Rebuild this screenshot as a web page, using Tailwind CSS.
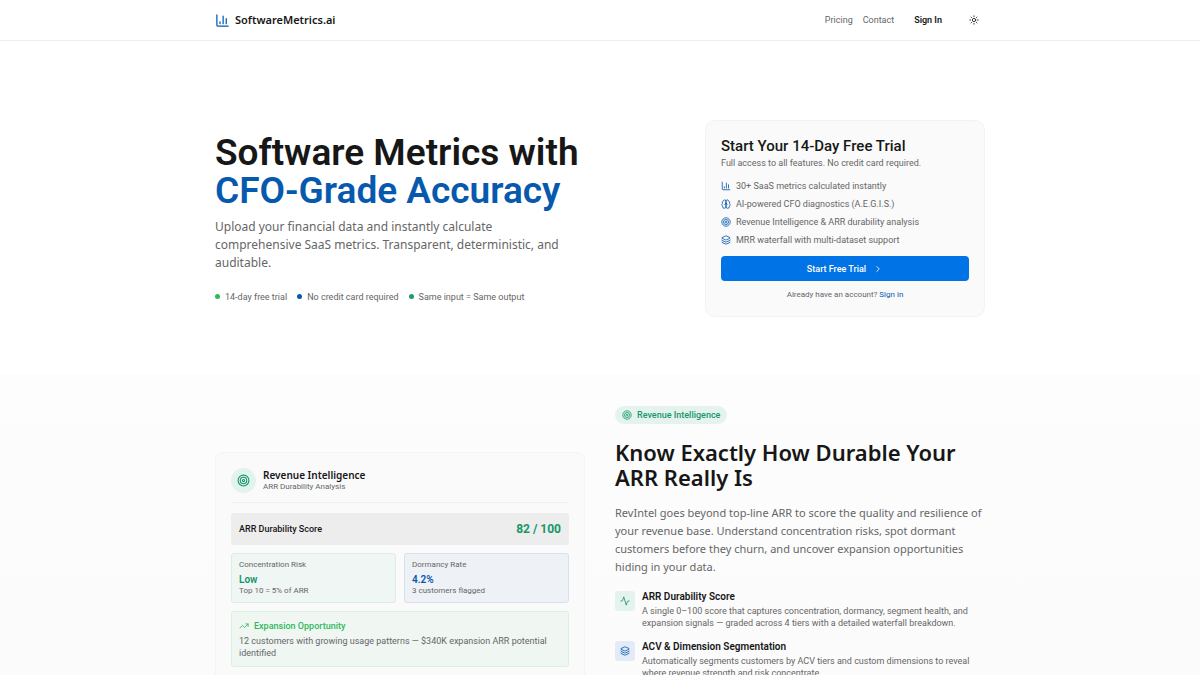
<!DOCTYPE html>
<html lang="en">
<head>
    <meta charset="UTF-8">
    <meta name="viewport" content="width=device-width, initial-scale=1.0">
    <title>SoftwareMetrics.ai</title>
    <script src="https://cdn.jsdelivr.net/npm/@tailwindcss/browser@4"></script>
</head>
<body class="bg-white text-[#171717] font-['Roboto','Noto_Sans',sans-serif] text-[9px] leading-[14px]">

    <!-- Shared icons -->
    <svg class="hidden" aria-hidden="true">
        <symbol id="chart" viewBox="0 0 24 24" fill="none" stroke="currentColor" stroke-width="2" stroke-linecap="round" stroke-linejoin="round">
            <path d="M3 3v16a2 2 0 0 0 2 2h16M8 17v-3M13 17V5M18 17V9" />
        </symbol>
        <symbol id="brain" viewBox="0 0 24 24" fill="none" stroke="currentColor" stroke-width="2" stroke-linecap="round" stroke-linejoin="round">
            <path d="M12 5a3 3 0 1 0-6 .1 4 4 0 0 0-2.5 5.8 4 4 0 0 0 .6 6.6A4 4 0 1 0 12 18ZM12 5a3 3 0 1 1 6 .1 4 4 0 0 1 2.5 5.8 4 4 0 0 1-.6 6.6A4 4 0 1 1 12 18ZM15 13a4.500 4.500 0 0 1-3-4 4.500 4.500 0 0 1-3 4" />
        </symbol>
        <symbol id="target" viewBox="0 0 24 24" fill="none" stroke="currentColor" stroke-width="2">
            <circle cx="12" cy="12" r="10" /><circle cx="12" cy="12" r="6" /><circle cx="12" cy="12" r="2" />
        </symbol>
        <symbol id="layers" viewBox="0 0 24 24" fill="none" stroke="currentColor" stroke-width="2" stroke-linecap="round" stroke-linejoin="round">
            <path d="M12.800 2.200a2 2 0 0 0-1.600 0L2.600 6.100a1 1 0 0 0 0 1.800l8.600 3.900a2 2 0 0 0 1.600 0l8.600-3.900a1 1 0 0 0 0-1.800ZM2 12a1 1 0 0 0 .6.900l8.600 3.900a2 2 0 0 0 1.600 0l8.600-3.900A1 1 0 0 0 22 12M2 17a1 1 0 0 0 .6.900l8.600 3.900a2 2 0 0 0 1.600 0l8.600-3.900A1 1 0 0 0 22 17" />
        </symbol>
    </svg>

    <!-- Header -->
    <header class="border-b border-[#eeeeee]">
        <div class="max-w-[800px] h-10 mx-auto px-[15px] flex items-center justify-between">
            <a href="#" class="flex items-center gap-[5px] font-['Noto_Sans',sans-serif] text-[11px] font-semibold">
                <svg class="size-[15px] text-[#0759ae]"><use href="#chart" /></svg>
                SoftwareMetrics.ai
            </a>
            <nav class="flex items-center text-[#666666]">
                <a href="#" class="mr-[10px]">Pricing</a>
                <a href="#" class="mr-[20px]">Contact</a>
                <a href="#" class="mr-[27px] font-semibold text-[#171717]">Sign In</a>
                <button type="button" aria-label="Toggle theme" class="mr-[6px] text-[#171717]">
                    <svg class="size-[10px] block" viewBox="0 0 24 24" fill="none" stroke="currentColor" stroke-width="2" stroke-linecap="round">
                        <circle cx="12" cy="12" r="4" />
                        <path d="M12 2v2M12 20v2M4.900 4.900l1.400 1.400M17.700 17.700l1.400 1.400M2 12h2M20 12h2M6.300 17.700l-1.400 1.400M19.100 4.900l-1.400 1.400" />
                    </svg>
                </button>
            </nav>
        </div>
    </header>

    <main>
        <!-- Hero -->
        <section class="max-w-[800px] mx-auto px-[15px] pt-[79px] pb-[57px] flex flex-col md:flex-row md:items-center justify-between gap-8">
            <div class="max-w-[400px]">
                <h1 class="text-[37px] leading-[38px] font-semibold">
                    Software Metrics with
                    <span class="block text-[#0759ae]">CFO-Grade Accuracy</span>
                </h1>
                <p class="mt-2 max-w-[360px] font-['Noto_Sans',sans-serif] text-[12px] leading-[18px] text-[#666666]">
                    Upload your financial data and instantly calculate comprehensive SaaS metrics. Transparent, deterministic, and auditable.
                </p>
                <ul class="mt-[18px] flex flex-wrap gap-[10px] text-[#666666]">
                    <li class="flex items-center gap-[5px]"><span class="size-[5px] rounded-full bg-[#2eb85c]"></span>14-day free trial</li>
                    <li class="flex items-center gap-[5px]"><span class="size-[5px] rounded-full bg-[#0759ae]"></span>No credit card required</li>
                    <li class="flex items-center gap-[5px]"><span class="size-[5px] rounded-full bg-[#1b9a6c]"></span>Same input = Same output</li>
                </ul>
            </div>

            <!-- Trial card -->
            <div class="w-full md:w-[280px] shrink-0 p-[15px] rounded-[10px] border border-[#f3f3f3] bg-[#fafafa]">
                <h2 class="text-[15px] leading-5 font-medium">Start Your 14-Day Free Trial</h2>
                <p class="text-[#666666]">Full access to all features. No credit card required.</p>
                <ul class="mt-[9px] flex flex-col gap-1 text-[#666666]">
                    <li class="flex items-center gap-[5px]"><svg class="size-[10px] text-[#0759ae]"><use href="#chart" /></svg>30+ SaaS metrics calculated instantly</li>
                    <li class="flex items-center gap-[5px]"><svg class="size-[10px] text-[#0759ae]"><use href="#brain" /></svg>AI-powered CFO diagnostics (A.E.G.I.S.)</li>
                    <li class="flex items-center gap-[5px]"><svg class="size-[10px] text-[#0759ae]"><use href="#target" /></svg>Revenue Intelligence &amp; ARR durability analysis</li>
                    <li class="flex items-center gap-[5px]"><svg class="size-[10px] text-[#0759ae]"><use href="#layers" /></svg>MRR waterfall with multi-dataset support</li>
                </ul>
                <button type="button" class="mt-[9px] w-full h-[25px] flex items-center justify-center gap-[7px] rounded-[4px] bg-[#0073e6] text-white font-medium">
                    Start Free Trial
                    <svg class="size-[10px]" viewBox="0 0 24 24" fill="none" stroke="currentColor" stroke-width="2" stroke-linecap="round" stroke-linejoin="round"><path d="m9 18 6-6-6-6" /></svg>
                </button>
                <p class="mt-2 text-center text-[8px] leading-3 text-[#666666]">Already have an account? <a href="#" class="text-[#0759ae]">Sign in</a></p>
            </div>
        </section>

        <!-- Revenue Intelligence -->
        <section class="bg-linear-to-b from-[#fdfdfd] to-[#fbfbfb]">
            <div class="max-w-[800px] mx-auto px-[15px] pt-8 pb-10 grid md:grid-cols-2 items-start gap-[30px]">
                <div class="md:mt-[46px] p-[15px] rounded-[8px] border border-[#f4f4f4] bg-[#fafafa]">
                    <div class="pb-[9px] flex items-center gap-[7px] border-b border-[#f0f0f0]">
                        <span class="size-[25px] flex items-center justify-center rounded-full bg-[#e2f2ec] text-[#16976a]">
                            <svg class="size-[13px]"><use href="#target" /></svg>
                        </span>
                        <div>
                            <h3 class="font-['Noto_Sans',sans-serif] text-[10px] leading-3 font-semibold">Revenue Intelligence</h3>
                            <p class="text-[8px] leading-3 text-[#666666]">ARR Durability Analysis</p>
                        </div>
                    </div>
                    <div class="mt-[10px] h-8 px-2 flex items-center justify-between rounded-[3px] bg-[#ededed]">
                        <span class="font-medium">ARR Durability Score</span>
                        <span class="text-[12px] font-bold text-[#16976a]">82 / 100</span>
                    </div>
                    <div class="mt-2 grid grid-cols-2 gap-2 text-[8px] leading-[10px] text-[#666666]">
                        <div class="px-[7px] py-[6px] rounded-[3px] border border-[#d9eee4] bg-[#eff6f3]">
                            <p>Concentration Risk</p>
                            <p class="mt-1 text-[10px] leading-3 font-semibold text-[#16976a]">Low</p>
                            <p>Top 10 = 5% of ARR</p>
                        </div>
                        <div class="px-[7px] py-[6px] rounded-[3px] border border-[#d6e1ee] bg-[#eef2f7]">
                            <p>Dormancy Rate</p>
                            <p class="mt-1 text-[10px] leading-3 font-semibold text-[#0759ae]">4.2%</p>
                            <p>3 customers flagged</p>
                        </div>
                    </div>
                    <div class="mt-2 px-[7px] py-[7px] rounded-[3px] border border-[#daf0e1] bg-[#f0f7f2]">
                        <h4 class="flex items-center gap-[5px] font-medium text-[#2eb85c]">
                            <svg class="size-[10px]" viewBox="0 0 24 24" fill="none" stroke="currentColor" stroke-width="2" stroke-linecap="round" stroke-linejoin="round"><path d="M22 7 13.500 15.500 8.500 10.500 2 17M16 7h6v6" /></svg>
                            Expansion Opportunity
                        </h4>
                        <p class="mt-[2px] leading-3 text-[#666666]">12 customers with growing usage patterns — $340K expansion ARR potential identified</p>
                    </div>
                </div>

                <div>
                    <span class="h-[18px] px-[7px] inline-flex items-center gap-[5px] rounded-full bg-[#e5f3ee] font-medium text-[#16976a]">
                        <svg class="size-[10px]"><use href="#target" /></svg>
                        Revenue Intelligence
                    </span>
                    <h2 class="mt-4 font-['Noto_Sans',sans-serif] text-[22px] leading-[25px] font-semibold">Know Exactly How Durable Your ARR Really Is</h2>
                    <p class="mt-[14px] font-['Noto_Sans',sans-serif] text-[11px] leading-[18px] text-[#666666]">
                        RevIntel goes beyond top-line ARR to score the quality and resilience of your revenue base. Understand concentration risks, spot dormant customers before they churn, and uncover expansion opportunities hiding in your data.
                    </p>
                    <ul class="mt-[15px] flex flex-col gap-3">
                        <li class="flex gap-[7px]">
                            <span class="size-5 shrink-0 flex items-center justify-center rounded-[3px] bg-[#e5f3ee] text-[#16976a]">
                                <svg class="size-[10px]" viewBox="0 0 24 24" fill="none" stroke="currentColor" stroke-width="2" stroke-linecap="round" stroke-linejoin="round"><path d="M22 12h-2.500a2 2 0 0 0-1.900 1.500l-2.400 8.300a.25.25 0 0 1-.4 0L9.200 2.200a.25.25 0 0 0-.4 0l-2.400 8.300A2 2 0 0 1 4.500 12H2" /></svg>
                            </span>
                            <div>
                                <h3 class="text-[10px] leading-3 font-semibold">ARR Durability Score</h3>
                                <p class="mt-[2px] leading-3 text-[#666666]">A single 0–100 score that captures concentration, dormancy, segment health, and expansion signals — graded across 4 tiers with a detailed waterfall breakdown.</p>
                            </div>
                        </li>
                        <li class="flex gap-[7px]">
                            <span class="size-5 shrink-0 flex items-center justify-center rounded-[3px] bg-[#e3ecf6] text-[#0759ae]">
                                <svg class="size-[10px]"><use href="#layers" /></svg>
                            </span>
                            <div>
                                <h3 class="text-[10px] leading-3 font-semibold">ACV &amp; Dimension Segmentation</h3>
                                <p class="mt-[2px] leading-3 text-[#666666]">Automatically segments customers by ACV tiers and custom dimensions to reveal where revenue strength and risk concentrate.</p>
                            </div>
                        </li>
                    </ul>
                </div>
            </div>
        </section>
    </main>

</body>
</html>
